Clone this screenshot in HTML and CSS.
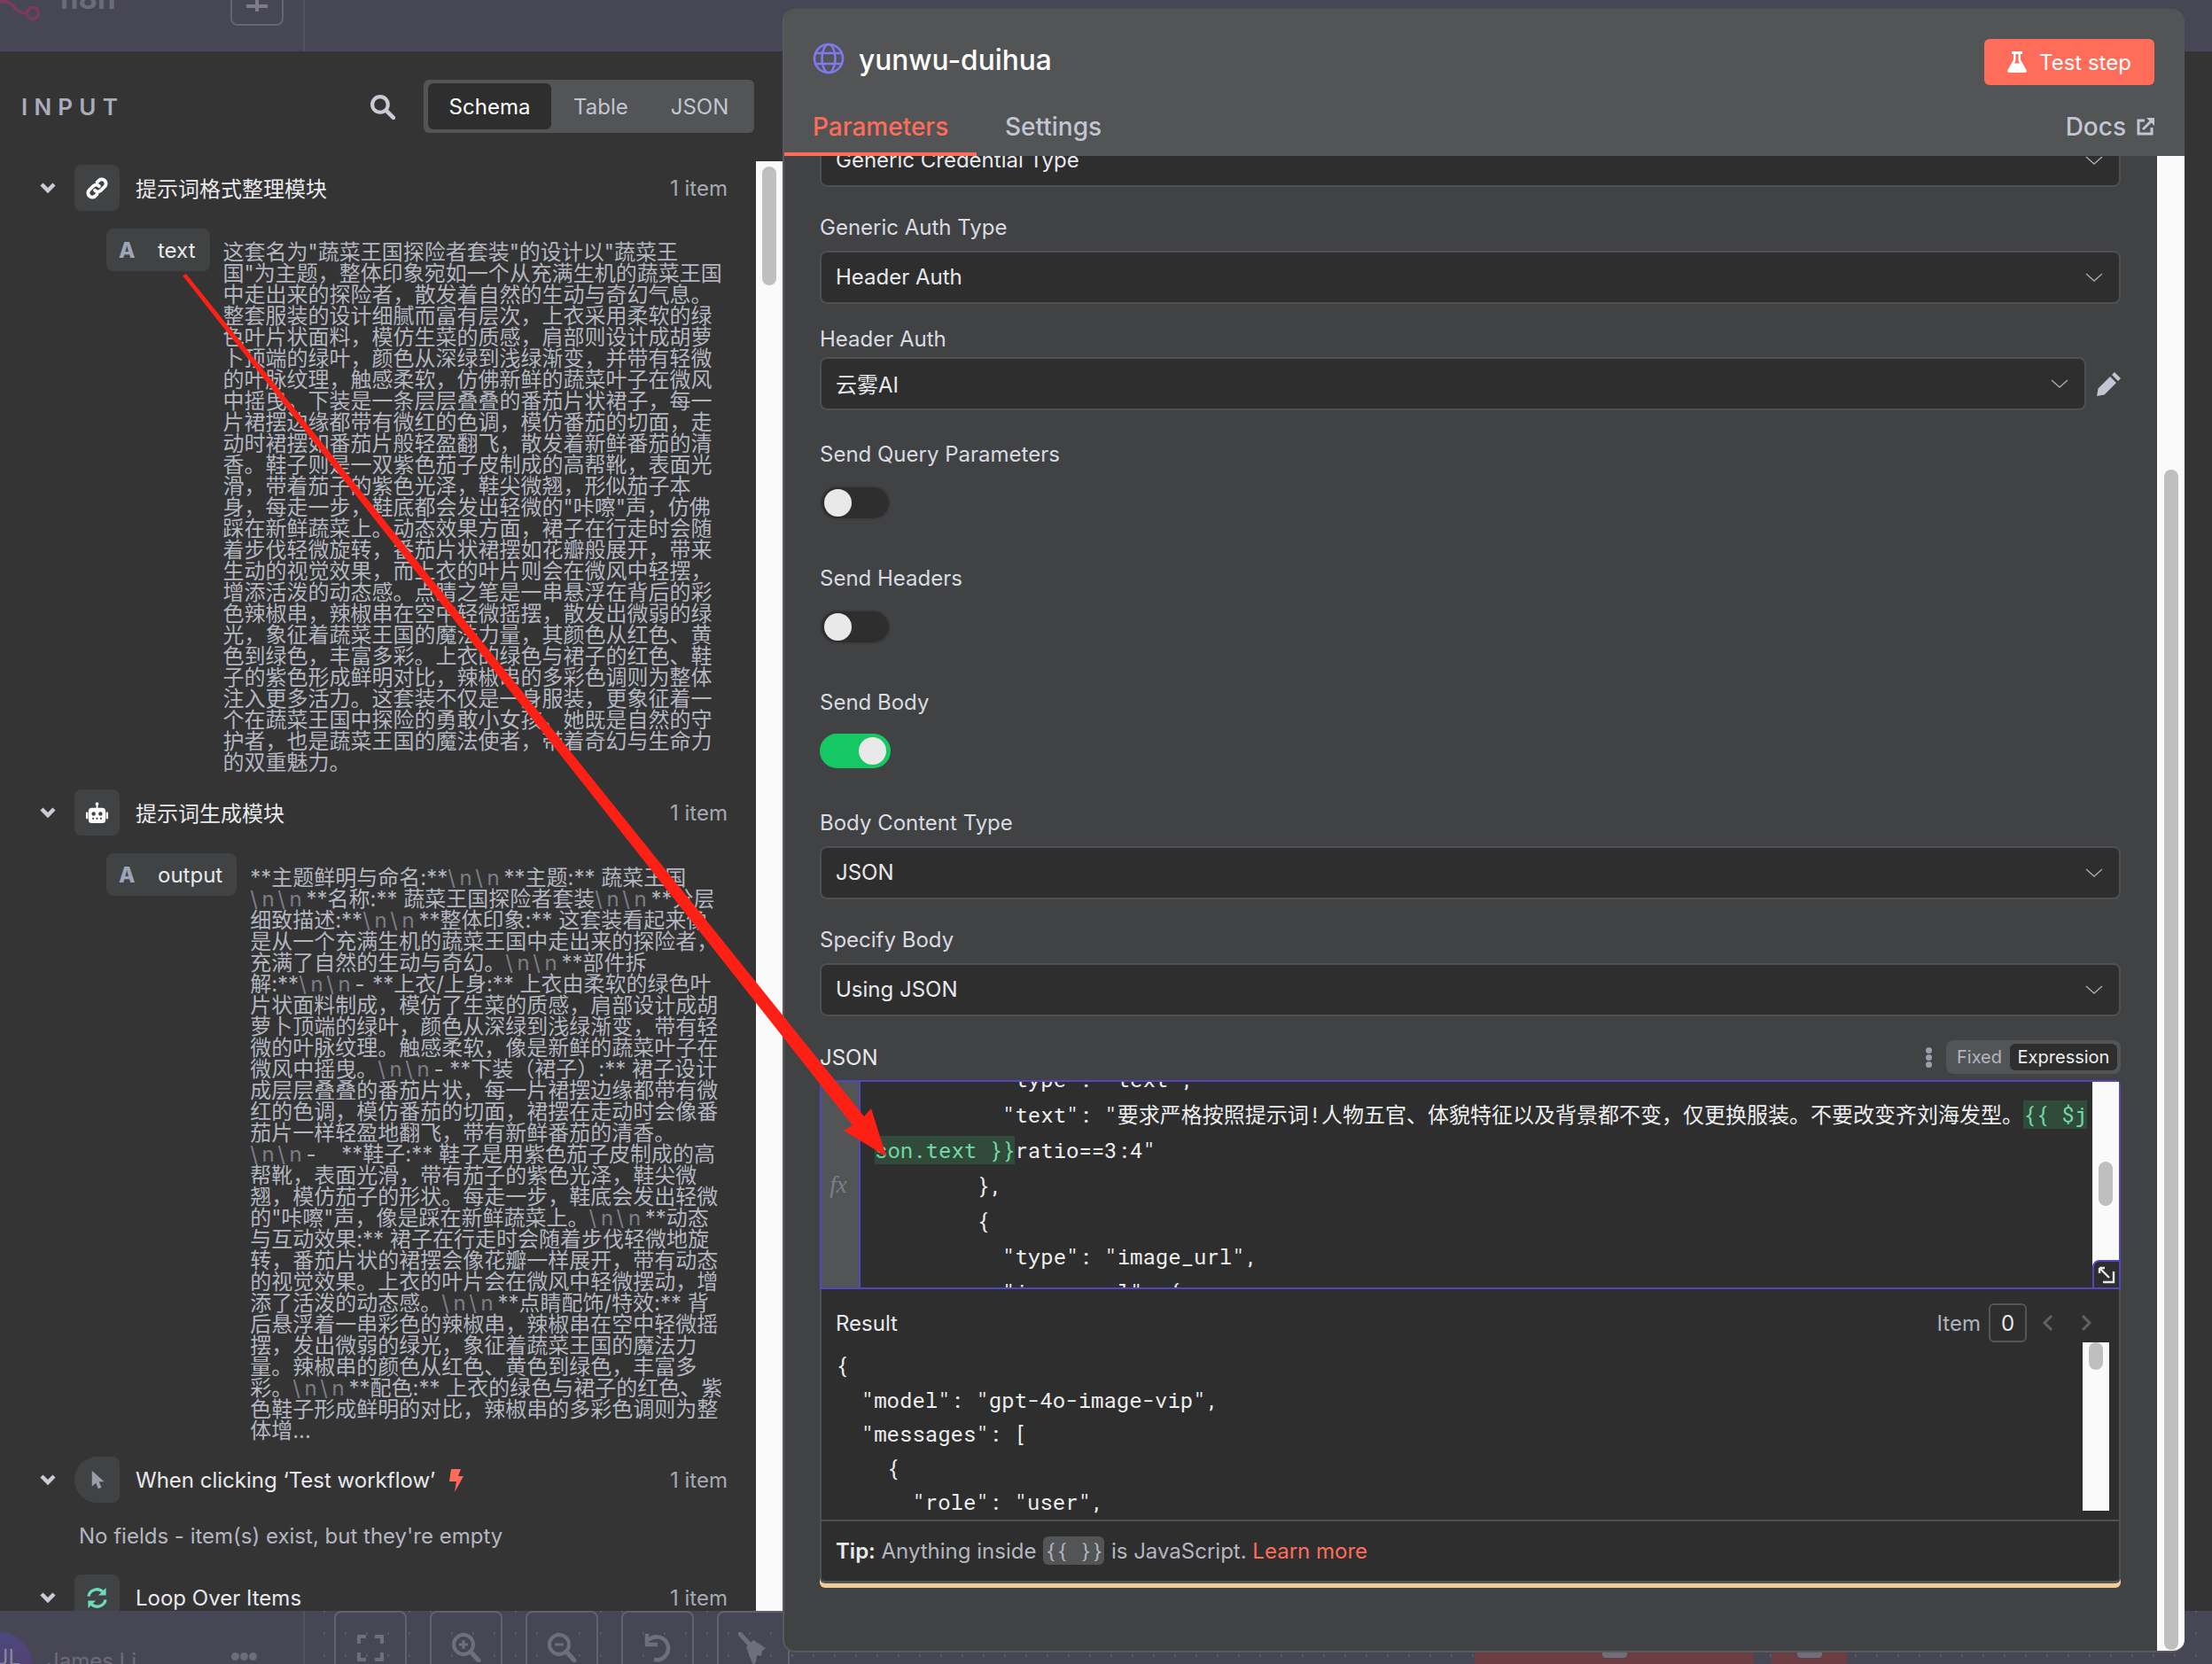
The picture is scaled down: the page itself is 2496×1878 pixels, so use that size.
FILE: index.html
```html
<!DOCTYPE html>
<html lang="zh-CN">
<head>
<meta charset="utf-8">
<title>yunwu-duihua</title>
<link rel="stylesheet" href="styles.css">
</head>
<body>
<div class="page">
  <header class="topbar">
    <div class="side-top">
      <svg class="logo" viewBox="0 0 50 30"><path d="M-4 4C6 -2 12 3 16 8c4 5 8 7 15 7" fill="none" stroke="#7a3c5c" stroke-width="3.500"/><circle cx="37" cy="15" r="6.500" fill="none" stroke="#7a3c5c" stroke-width="3.500"/></svg>
      <span class="brand">n8n</span>
      <span class="plus-btn"><svg viewBox="0 0 24 30" width="24" height="30"><path d="M12 0v26M0 20h24" stroke="#7c7b87" stroke-width="4"/></svg></span>
    </div>
  </header>

  <main class="main">
    <section class="input-panel">
      <div class="input-head">
        <span class="input-title">INPUT</span>
        <svg class="search" viewBox="0 0 28 28"><circle cx="11.5" cy="11.5" r="8.5" fill="none" stroke="#c9ccd6" stroke-width="4"/><path d="M18 18l8 8" stroke="#c9ccd6" stroke-width="4.5" stroke-linecap="round"/></svg>
        <div class="seg">
          <span class="seg-item seg-active">Schema</span>
          <span class="seg-item seg-table">Table</span>
          <span class="seg-item seg-json">JSON</span>
        </div>
      </div>
      <div class="input-scroll">
        <div class="schema">
          <div class="node-row">
            <svg class="caret" viewBox="0 0 20 14"><path d="M3 3l7 7 7-7" fill="none" stroke="#c9ccd6" stroke-width="4.5"/></svg>
            <span class="node-icon"><svg viewBox="0 0 28 28" width="27" height="27"><g fill="none" stroke="#fff" stroke-width="4" stroke-linecap="round"><path d="M11.5 16.5a5 5 0 0 0 7 0l5-5a5 5 0 0 0-7-7l-2.5 2.5"/><path d="M16.5 11.5a5 5 0 0 0-7 0l-5 5a5 5 0 0 0 7 7l2.5-2.5"/></g></svg></span>
            <span class="node-name node-name-cjk">提示词格式整理模块</span>
            <span class="node-count">1 item</span>
          </div>
          <div class="field-row">
            <span class="pill"><b class="pill-a">A</b><span class="pill-key">text</span></span>
            <p class="value value-text">这套名为"蔬菜王国探险者套装"的设计以"蔬菜王国"为主题，整体印象宛如一个从充满生机的蔬菜王国中走出来的探险者，散发着自然的生动与奇幻气息。整套服装的设计细腻而富有层次，上衣采用柔软的绿色叶片状面料，模仿生菜的质感，肩部则设计成胡萝卜顶端的绿叶，颜色从深绿到浅绿渐变，并带有轻微的叶脉纹理，触感柔软，仿佛新鲜的蔬菜叶子在微风中摇曳。下装是一条层层叠叠的番茄片状裙子，每一片裙摆边缘都带有微红的色调，模仿番茄的切面，走动时裙摆如番茄片般轻盈翻飞，散发着新鲜番茄的清香。鞋子则是一双紫色茄子皮制成的高帮靴，表面光滑，带着茄子的紫色光泽，鞋尖微翘，形似茄子本身，每走一步，鞋底都会发出轻微的"咔嚓"声，仿佛踩在新鲜蔬菜上。动态效果方面，裙子在行走时会随着步伐轻微旋转，番茄片状裙摆如花瓣般展开，带来生动的视觉效果，而上衣的叶片则会在微风中轻摆，增添活泼的动态感。点睛之笔是一串悬浮在背后的彩色辣椒串，辣椒串在空中轻微摇摆，散发出微弱的绿光，象征着蔬菜王国的魔法力量，其颜色从红色、黄色到绿色，丰富多彩。上衣的绿色与裙子的红色、鞋子的紫色形成鲜明对比，辣椒串的多彩色调则为整体注入更多活力。这套装不仅是一身服装，更象征着一个在蔬菜王国中探险的勇敢小女孩，她既是自然的守护者，也是蔬菜王国的魔法使者，带着奇幻与生命力的双重魅力。</p>
          </div>
          <div class="node-row node-row-2">
            <svg class="caret" viewBox="0 0 20 14"><path d="M3 3l7 7 7-7" fill="none" stroke="#c9ccd6" stroke-width="4.5"/></svg>
            <span class="node-icon"><svg viewBox="0 0 28 28" width="27" height="27"><path fill="#fff" d="M14 1.5a2 2 0 0 1 1 3.7V8h5a4 4 0 0 1 4 4v10a4 4 0 0 1-4 4H8a4 4 0 0 1-4-4V12a4 4 0 0 1 4-4h5V5.200a2 2 0 0 1 1-3.700z"/><rect x="1" y="13" width="2.500" height="8" rx="1" fill="#fff"/><rect x="24.500" y="13" width="2.500" height="8" rx="1" fill="#fff"/><circle cx="10" cy="15" r="2.300" fill="#414244"/><circle cx="18" cy="15" r="2.300" fill="#414244"/><path d="M8.500 20.500h2M13 20.500h2M17.500 20.500h2" stroke="#414244" stroke-width="2"/></svg></span>
            <span class="node-name node-name-cjk">提示词生成模块</span>
            <span class="node-count">1 item</span>
          </div>
          <div class="field-row">
            <span class="pill"><b class="pill-a">A</b><span class="pill-key">output</span></span>
            <p class="value value-output">**主题鲜明与命名:**<i class="nl">\n</i><i class="nl">\n</i>**主题:** 蔬菜王国<i class="nl">\n</i><i class="nl">\n</i>**名称:** 蔬菜王国探险者套装<i class="nl">\n</i><i class="nl">\n</i>**分层细致描述:**<i class="nl">\n</i><i class="nl">\n</i>**整体印象:** 这套装看起来像是从一个充满生机的蔬菜王国中走出来的探险者，充满了自然的生动与奇幻。<i class="nl">\n</i><i class="nl">\n</i>**部件拆解:**<i class="nl">\n</i><i class="nl">\n</i><span class="dash">-</span> **上衣/上身:** 上衣由柔软的绿色叶片状面料制成，模仿了生菜的质感，肩部设计成胡萝卜顶端的绿叶，颜色从深绿到浅绿渐变，带有轻微的叶脉纹理。触感柔软，像是新鲜的蔬菜叶子在微风中摇曳。<i class="nl">\n</i><i class="nl">\n</i>- **下装（裙子）:** 裙子设计成层层叠叠的番茄片状，每一片裙摆边缘都带有微红的色调，模仿番茄的切面，裙摆在走动时会像番茄片一样轻盈地翻飞，带有新鲜番茄的清香。<i class="nl">\n</i><i class="nl">\n</i><span class="dash-wide">-</span> **鞋子:** 鞋子是用紫色茄子皮制成的高帮靴，表面光滑，带有茄子的紫色光泽，鞋尖微翘，模仿茄子的形状。每走一步，鞋底会发出轻微的"咔嚓"声，像是踩在新鲜蔬菜上。<i class="nl">\n</i><i class="nl">\n</i>**动态与互动效果:** 裙子在行走时会随着步伐轻微地旋转，番茄片状的裙摆会像花瓣一样展开，带有动态的视觉效果。上衣的叶片会在微风中轻微摆动，增添了活泼的动态感。<i class="nl">\n</i><i class="nl">\n</i>**点睛配饰/特效:** 背后悬浮着一串彩色的辣椒串，辣椒串在空中轻微摇摆，发出微弱的绿光，象征着蔬菜王国的魔法力量。辣椒串的颜色从红色、黄色到绿色，丰富多彩。<i class="nl">\n</i><i class="nl">\n</i>**配色:** 上衣的绿色与裙子的红色、紫色鞋子形成鲜明的对比，辣椒串的多彩色调则为整体增...</p>
          </div>
          <div class="node-row node-row-3">
            <svg class="caret" viewBox="0 0 20 14"><path d="M3 3l7 7 7-7" fill="none" stroke="#c9ccd6" stroke-width="4.5"/></svg>
            <span class="node-icon node-icon-round"><svg viewBox="0 0 20 28" width="18" height="25"><path fill="#9a9da8" d="M3 2v20l5-4.500L11 25l4-1.700-3-7.300h6.500z"/></svg></span>
            <span class="node-name">When clicking ‘Test workflow’</span>
            <svg class="bolt" viewBox="0 0 18 26"><path fill="#ff6d5a" d="M3 0h11l-3 8h6L7 26l2-12H1z"/></svg>
            <span class="node-count">1 item</span>
          </div>
          <p class="no-fields">No fields - item(s) exist, but they're empty</p>
          <div class="node-row node-row-4">
            <svg class="caret" viewBox="0 0 20 14"><path d="M3 3l7 7 7-7" fill="none" stroke="#c9ccd6" stroke-width="4.5"/></svg>
            <span class="node-icon"><svg viewBox="0 0 26 26" width="25" height="25"><g fill="none" stroke="#6adcbb" stroke-width="3.400"><path d="M3 11a10 10 0 0 1 17-5"/><path d="M23 15a10 10 0 0 1-17 5"/></g><path fill="#6adcbb" d="M23.500 1v9h-9zM2.500 25v-9h9z"/></svg></span>
            <span class="node-name">Loop Over Items</span>
            <span class="node-count">1 item</span>
          </div>
        </div>
        <div class="scrollbar left-bar"><span class="thumb left-thumb"></span></div>
      </div>
    </section>
  </main>

  <footer class="bottombar">
    <div class="side-bottom">
      <span class="avatar">JL</span>
      <span class="user">James Li</span>
      <span class="more"><i></i><i></i><i></i></span>
    </div>
    <div class="tools">
      <span class="tool tool-fit"><svg viewBox="0 0 30 30" width="30" height="30"><path d="M2 10V2h8M20 2h8v8M28 20v8h-8M10 28H2v-8" fill="none" stroke="#6f6e7b" stroke-width="4"/></svg></span>
      <span class="tool"><svg viewBox="0 0 34 34" width="34" height="34"><circle cx="14" cy="14" r="11" fill="none" stroke="#6f6e7b" stroke-width="4"/><path d="M22 22l9 10" stroke="#6f6e7b" stroke-width="5" stroke-linecap="round"/><path d="M14 9v10M9 14h10" stroke="#6f6e7b" stroke-width="3"/></svg></span>
      <span class="tool"><svg viewBox="0 0 34 34" width="34" height="34"><circle cx="14" cy="14" r="11" fill="none" stroke="#6f6e7b" stroke-width="4"/><path d="M22 22l9 10" stroke="#6f6e7b" stroke-width="5" stroke-linecap="round"/><path d="M9 14h10" stroke="#6f6e7b" stroke-width="3"/></svg></span>
      <span class="tool"><svg viewBox="0 0 34 34" width="34" height="34"><path d="M7 9a13 13 0 1 1 6 22" fill="none" stroke="#6f6e7b" stroke-width="4.500"/><path d="M5 2v12h12" fill="none" stroke="#6f6e7b" stroke-width="4.500"/></svg></span>
      <span class="tool"><svg viewBox="0 0 34 40" width="34" height="40"><path d="M2 2l12 13" stroke="#6f6e7b" stroke-width="5" stroke-linecap="round"/><path fill="#6f6e7b" d="M9 17l8-8 14 9-4 3-1 6-5-1-1 8-3 4z"/></svg></span>
    </div>
    <span class="stub stub-a"><i></i></span>
    <span class="stub stub-b"><i></i></span>
  </footer>

  <section class="detail">
    <div class="detail-head">
      <div class="title-row">
        <svg class="globe" viewBox="0 0 36 36"><g fill="none" stroke="#8078f0" stroke-width="2.600"><circle cx="18" cy="18" r="16"/><ellipse cx="18" cy="18" rx="7.500" ry="16"/><path d="M3.500 12h29M3.500 24h29"/></g></svg>
        <span class="title">yunwu-duihua</span>
        <span class="test-btn"><svg viewBox="0 0 22 24" width="22" height="24"><path fill="#fff" d="M5 0h12v3h-2v6.500l6.500 11.500c.8 1.500 0 3-1.800 3H2.300c-1.800 0-2.600-1.500-1.800-3L7 9.500V3H5z"/><path fill="#ff6d5a" d="M9.500 3h3v7.500l1.500 3H8l1.500-3z"/></svg>Test step</span>
      </div>
      <div class="tabs">
        <span class="tab tab-active">Parameters</span>
        <span class="tab">Settings</span>
        <span class="docs">Docs<svg viewBox="0 0 20 20" width="20" height="20"><path d="M9 3H2v15h15v-7" fill="none" stroke="#c2c6d2" stroke-width="3"/><path d="M7 13L17 3" fill="none" stroke="#c2c6d2" stroke-width="3"/><path fill="#c2c6d2" d="M11 0h9v9z"/></svg></span>
      </div>
    </div>
    <div class="detail-body">
      <div class="form-clip">
        <div class="form">
          <div class="select"><span>Generic Credential Type</span><svg class="chev" viewBox="0 0 20 10"><path d="M1 1l9 8 9-8" fill="none" stroke="#a3a7b3" stroke-width="1.500"/></svg></div>

          <label class="label gap-a">Generic Auth Type</label>
          <div class="select"><span>Header Auth</span><svg class="chev" viewBox="0 0 20 10"><path d="M1 1l9 8 9-8" fill="none" stroke="#a3a7b3" stroke-width="1.500"/></svg></div>

          <label class="label gap-b label-tight">Header Auth</label>
          <div class="select-row">
            <div class="select select-short"><span>云雾AI</span><svg class="chev" viewBox="0 0 20 10"><path d="M1 1l9 8 9-8" fill="none" stroke="#a3a7b3" stroke-width="1.500"/></svg></div>
            <svg class="pencil" viewBox="0 0 30 30"><path fill="#c2c6d2" d="M21 2l7 7-3 3-7-7zM16 7l7 7L9.500 27.500 1 29l1.500-8.500z"/></svg>
          </div>

          <label class="label gap-c label-toggle">Send Query Parameters</label>
          <span class="toggle"><i></i></span>
          <label class="label gap-d label-toggle">Send Headers</label>
          <span class="toggle"><i></i></span>
          <label class="label gap-d label-toggle">Send Body</label>
          <span class="toggle toggle-on"><i></i></span>

          <label class="label gap-e">Body Content Type</label>
          <div class="select"><span>JSON</span><svg class="chev" viewBox="0 0 20 10"><path d="M1 1l9 8 9-8" fill="none" stroke="#a3a7b3" stroke-width="1.500"/></svg></div>

          <label class="label gap-f">Specify Body</label>
          <div class="select"><span>Using JSON</span><svg class="chev" viewBox="0 0 20 10"><path d="M1 1l9 8 9-8" fill="none" stroke="#a3a7b3" stroke-width="1.500"/></svg></div>

          <div class="json-head">
            <span class="json-label">JSON</span>
            <span class="kebab"><i></i><i></i><i></i></span>
            <div class="mode"><span class="mode-item">Fixed</span><span class="mode-item mode-active">Expression</span></div>
          </div>

          <div class="editor">
            <div class="gutter"><span class="fx">fx</span></div>
            <div class="code">
              <div class="code-lines">
                <div class="ln">          "type": "text",</div>
                <div class="ln">          "text": "要求严格按照提示词!人物五官、体貌特征以及背景都不变，仅更换服装。不要改变齐刘海发型。<span class="expr">{{ $j</span></div>
                <div class="ln"><span class="expr">son.text }}</span>ratio==3:4"</div>
                <div class="ln">        },</div>
                <div class="ln">        {</div>
                <div class="ln">          "type": "image_url",</div>
                <div class="ln">          "image_url": {</div>
              </div>
            </div>
            <div class="scrollbar editor-bar"><span class="thumb editor-thumb"></span></div>
            <span class="expand"><svg viewBox="0 0 20 20" width="20" height="20"><path d="M2 2l11 11M2 2h6M2 2v6" fill="none" stroke="#e6e7ec" stroke-width="2.400"/><path d="M18 6v12H6" fill="none" stroke="#e6e7ec" stroke-width="2.400"/></svg></span>
          </div>

          <div class="result-wrap">
            <div class="result">
              <div class="result-head">
                <span class="result-title">Result</span>
                <span class="item-label">Item</span>
                <span class="item-box">0</span>
                <svg class="pager" viewBox="0 0 12 20"><path d="M10 2l-8 8 8 8" fill="none" stroke="#626262" stroke-width="3"/></svg>
                <svg class="pager" viewBox="0 0 12 20"><path d="M2 2l8 8-8 8" fill="none" stroke="#626262" stroke-width="3"/></svg>
              </div>
              <div class="result-body">
                <div class="result-code">
                  <div class="rl">{</div>
                  <div class="rl">  "model": "gpt-4o-image-vip",</div>
                  <div class="rl">  "messages": [</div>
                  <div class="rl">    {</div>
                  <div class="rl">      "role": "user",</div>
                </div>
                <div class="scrollbar result-bar"><span class="thumb result-thumb"></span></div>
              </div>
              <div class="tip"><b>Tip:</b> Anything inside <code class="tip-code">{{ }}</code> is JavaScript. <span class="tip-link">Learn more</span></div>
            </div>
          </div>
        </div>
      </div>
      <div class="scrollbar page-bar"><span class="thumb page-thumb"></span></div>
    </div>
  </section>

  <svg class="arrow" viewBox="0 0 2496 1878"><path fill="#ff2015" d="M206 311L210 309 975 1260 983 1251 1000 1305 952 1276 962 1270z"/></svg>
</div>
</body>
</html>
```

FILE: styles.css
```css
* { box-sizing: border-box; }
html, body { margin: 0; padding: 0; }
body {
  width: 2496px;
  height: 1878px;
  overflow: hidden;
  background: #474655;
  font-family: Inter, "Noto Sans CJK SC", sans-serif;
  font-size: 24px;
  color: #e8e9ec;
}
.page {
  position: relative;
  width: 2496px;
  height: 1878px;
  display: flex;
  flex-direction: column;
  overflow: hidden;
}

/* canvas chrome */
.topbar { height: 58px; background: #474655; flex: none; overflow: hidden; }
.side-top {
  width: 344px;
  height: 58px;
  border-right: 2px solid #525160;
  display: flex;
  align-items: flex-start;
  position: relative;
}
.logo { width: 50px; height: 30px; flex: none; }
.brand { margin: -22px 0 0 18px; font-size: 33px; font-weight: 700; line-height: 40px; color: #6c6b78; }
.plus-btn {
  margin: -30px 0 0 129px;
  width: 60px;
  height: 59px;
  padding-top: 15px;
  border: 2px solid #65646f;
  border-radius: 8px;
  display: flex;
  align-items: flex-start;
  justify-content: center;
}

.main { flex: 1; min-height: 0; background: #343434; }
.input-panel { width: 883px; height: 100%; display: flex; flex-direction: column; background: #343434; border-top-left-radius: 12px; }
.input-head { height: 124px; flex: none; display: flex; align-items: center; padding: 0 32px 0 24px; }
.input-title { font-size: 26px; font-weight: 600; letter-spacing: 7.200px; color: #a9adba; }
.search { width: 29px; height: 29px; margin-left: auto; margin-right: 32px; }
.seg {
  width: 373px;
  height: 60px;
  padding: 4px 5px;
  display: flex;
  align-items: center;
  background: #535456;
  border-radius: 6px;
  font-size: 24px;
}
.seg-item { color: #c2c6d2; }
.seg-active { width: 139px; height: 52px; border-radius: 6px; background: #2e2e2e; color: #fff; display: flex; align-items: center; justify-content: center; }
.seg-table { margin-left: 25px; }
.seg-json { margin-left: 48px; }
.input-scroll { flex: 1; min-height: 0; display: flex; overflow: hidden; }
.schema { width: 853px; flex: none; padding-top: 4px; overflow: hidden; }
.node-row { height: 52px; display: flex; align-items: center; padding-left: 44px; padding-right: 32px; }
.node-row-2 { margin-top: 18px; }
.node-row-3 { margin-top: 17px; }
.node-row-4 { margin-top: 28px; }
.caret { width: 20px; height: 14px; flex: none; }
.node-icon {
  width: 51px;
  height: 52px;
  flex: none;
  margin: 0 18px 0 20px;
  background: #414244;
  border-radius: 8px;
  display: flex;
  align-items: center;
  justify-content: center;
}
.node-icon-round { border-radius: 50% 8px 8px 50%; }
.node-name { font-size: 24px; color: #e8e9ec; white-space: nowrap; }
.node-name-cjk { padding-bottom: 2px; }
.bolt { width: 18px; height: 26px; margin-left: 15px; margin-top: 2px; flex: none; }
.node-count { margin-left: auto; color: #a5a9b5; font-size: 24px; }
.field-row { display: flex; align-items: flex-start; margin-top: 20px; padding-left: 120px; }
.pill {
  height: 48px;
  padding: 0 16px 0 14px;
  display: flex;
  align-items: center;
  flex: none;
  background: #414244;
  border-radius: 8px;
}
.pill-a { width: 18px; color: #9ea4b4; font-weight: 800; font-size: 24px; }
.pill-key { margin-left: 26px; color: #e8e9ec; }
.value {
  margin: 15px 0 0 15px;
  font-size: 24px;
  line-height: 24px;
  color: #b3b6c0;
}
.value-text { width: 564px; }
.value-output { width: 537px; margin-top: 16px; }
.nl { font-style: normal; color: #7c7e87; letter-spacing: 4.700px; }
.dash { letter-spacing: 2px; }
.dash-wide { letter-spacing: 22px; }
.no-fields { margin: 23px 0 0 89px; color: #b3b6c0; line-height: 30px; }

/* scrollbars */
.scrollbar { background: #fafafa; display: flex; justify-content: center; }
.thumb { display: block; background: #bfbfbf; border-radius: 8px; width: 16px; }
.left-bar { width: 30px; flex: none; align-items: flex-start; padding-top: 6px; }
.left-thumb { height: 134px; }

/* bottom */
.bottombar {
  height: 60px;
  flex: none;
  background-color: #474655;
  background-image: radial-gradient(circle, #5d5c69 1px, transparent 1.500px);
  background-size: 24px 25px;
  background-position: -6px -12px;
  display: flex;
  overflow: hidden;
}
.side-bottom {
  width: 344px;
  flex: none;
  background: #474655;
  border-right: 2px solid #525160;
  display: flex;
  align-items: flex-start;
  position: relative;
}
.avatar {
  width: 72px;
  height: 72px;
  flex: none;
  margin: 24px 0 0 -36px;
  border-radius: 50%;
  background: linear-gradient(135deg, #4a4a82, #53406e);
  color: #8a8a96;
  display: flex;
  justify-content: flex-end;
  padding: 14px 13px 0 0;
  font-size: 24px;
}
.user { margin: 42px 0 0 17px; color: #6d6c7a; font-size: 24px; line-height: 30px; }
.more { margin: 47px 0 0 107px; display: flex; gap: 1px; }
.more i { width: 9px; height: 9px; border-radius: 50%; background: #6d6c7a; }
.tools { display: flex; gap: 26px; margin-left: 33px; }
.tool {
  width: 82px;
  height: 90px;
  padding-top: 22px;
  flex: none;
  border: 2px solid #62616f;
  border-radius: 8px;
  display: flex;
  justify-content: center;
  align-items: flex-start;
}
.tool-fit { padding-top: 25px; }
.stub { align-self: flex-end; height: 13px; background: #6b3e44; display: flex; justify-content: center; }
.stub i { display: block; width: 28px; height: 6px; border-radius: 0 0 4px 4px; background: #6f6e7b; }
.stub-a { width: 315px; margin-left: 773px; }
.stub-b { width: 85px; margin-left: 20px; }

/* detail panel floating over the canvas */
.detail {
  position: absolute;
  left: 883px;
  top: 10px;
  width: 1582px;
  height: 1855px;
  display: flex;
  flex-direction: column;
  border-radius: 14px;
  overflow: hidden;
  background: #414244;
  border-bottom: 2px solid #5a5a5c;
  border-left: 2px solid #5a5a5c;
}
.detail-head { height: 166px; flex: none; background: #535456; padding: 0 34px 0 32px; position: relative; z-index: 1; }
.title-row { height: 114px; display: flex; align-items: center; padding-top: 6px; }
.globe { width: 36px; height: 36px; flex: none; margin-top: -8px; }
.title { margin: -6px 0 0 16px; font-size: 31.700px; font-weight: 500; color: #fff; }
.test-btn {
  margin-left: auto;
  width: 192px;
  height: 52px;
  background: #ff6d5a;
  border-radius: 6px;
  color: #fff;
  font-size: 24px;
  display: flex;
  align-items: center;
  justify-content: center;
  gap: 14px;
}
.tabs { height: 52px; display: flex; align-items: flex-start; margin-left: -32px; }
.tab { padding: 2px 32px 14px; height: 52px; font-size: 28px; line-height: 34px; color: #c2c6d2; font-weight: 500; }
.tab-active { color: #ff6d5a; border-bottom: 4px solid #ff6d5a; width: 217px; }
.docs { margin-left: auto; padding-top: 2px; display: flex; align-items: center; gap: 12px; font-size: 28px; line-height: 34px; color: #c2c6d2; font-weight: 500; }
.detail-body { flex: 1; min-height: 0; display: flex; }
.form-clip { flex: 1; min-width: 0; overflow: hidden; padding: 0 41px 0 40px; }
.form { margin-top: -25px; }
.page-bar { width: 31px; flex: none; align-items: flex-start; padding-top: 354px; }
.page-thumb { height: 1332px; }

.select {
  height: 60px;
  padding: 0 18px 0 16px;
  display: flex;
  align-items: center;
  justify-content: space-between;
  background: #2e2e2e;
  border: 2px solid #4f4f51;
  border-radius: 8px;
  color: #e8e9ec;
  font-size: 24px;
}
.select span { padding-bottom: 1px; }
.chev { width: 20px; height: 10px; flex: none; }
.select-row { display: flex; align-items: center; }
.select-short { width: 1429px; flex: none; }
.pencil { width: 30px; height: 30px; margin-left: 11px; flex: none; }
.label { display: block; height: 30px; line-height: 30px; font-size: 24px; color: #d9dbe1; margin-bottom: 11px; }
.label-tight { margin-bottom: 5px; }
.label-toggle { margin-bottom: 20px; }
.gap-a { margin-top: 31px; }
.gap-b { margin-top: 25px; }
.gap-c { margin-top: 35px; }
.gap-d { margin-top: 51px; }
.gap-e { margin-top: 47px; }
.gap-f { margin-top: 31px; }
.toggle {
  display: block;
  width: 80px;
  height: 39px;
  border-radius: 20px;
  background: #2e2e2e;
  border: 2px solid #3c3c3e;
  padding: 2px 3px;
}
.toggle i { display: block; width: 31px; height: 31px; border-radius: 50%; background: #e9e9ea; }
.toggle-on { background: #15c864; border-color: #15c864; display: flex; justify-content: flex-end; }

.json-head { margin-top: 27px; height: 38px; display: flex; align-items: center; }
.json-label { color: #e8e9ec; }
.kebab { margin-left: auto; display: flex; flex-direction: column; gap: 1px; }
.kebab i { width: 7px; height: 7px; border-radius: 50%; background: #9a9ea9; }
.mode { margin-left: 16px; width: 197px; height: 38px; background: #535456; border-radius: 8px; display: flex; align-items: center; padding: 0 4px 0 12px; font-size: 20px; }
.mode-item { color: #b3b6c0; }
.mode-active { margin-left: auto; width: 121px; height: 30px; line-height: 30px; text-align: center; background: #2e2e2e; border-radius: 6px; color: #eceded; }

.editor {
  position: relative;
  margin-top: 7px;
  height: 236px;
  display: flex;
  background: #2e2e2e;
  border: 2px solid #5346bf;
  border-radius: 4px 6px 0 0;
}
.gutter { width: 44px; flex: none; background: #535456; border-right: 2px solid #5346bf; display: flex; align-items: center; justify-content: center; padding-top: 1px; padding-right: 4px; }
.fx { font-family: "Liberation Serif", serif; font-style: italic; font-size: 27px; color: #7c7f89; }
.code { flex: 1; min-width: 0; overflow: hidden; padding-left: 16px; }
.code-lines { margin-top: -23px; }
.ln { height: 40px; line-height: 40px; white-space: pre; font-family: "Roboto Mono", "Noto Sans CJK SC", monospace; font-size: 24px; color: #eceded; }
.expr { background: #314b3b; color: #72d8a6; }
.editor-bar { width: 30px; flex: none; align-items: flex-start; padding-top: 90px; }
.editor-thumb { height: 50px; }
.expand {
  position: absolute;
  right: -2px;
  bottom: -2px;
  width: 32px;
  height: 33px;
  background: #2e2e2e;
  border: 2px solid #5346bf;
  border-top-left-radius: 8px;
  display: flex;
  align-items: center;
  justify-content: center;
}

.result-wrap { padding-bottom: 5px; background: #f3cd99; border-radius: 0 0 6px 6px; }
.result { background: #2e2e2e; border-left: 2px solid #505052; border-right: 2px solid #505052; border-bottom: 3px solid #555; border-radius: 0 0 6px 6px; }
.result-head { height: 60px; display: flex; align-items: center; padding: 16px 31px 0 16px; }
.result-title { margin-right: auto; color: #e8e9ec; }
.item-label { color: #aeb2be; }
.item-box { width: 43px; height: 44px; margin-left: 9px; border: 2px solid #555; border-radius: 6px; display: flex; align-items: center; justify-content: center; color: #e8e9ec; }
.pager { width: 12px; height: 20px; margin-left: 18px; flex: none; }
.pager + .pager { margin-left: 31px; }
.result-body { height: 202px; display: flex; border-bottom: 2px solid #505052; overflow: hidden; }
.result-code { flex: 1; padding: 7px 0 0 16px; }
.rl { height: 38.500px; line-height: 38.500px; white-space: pre; font-family: "Roboto Mono", monospace; font-size: 24px; color: #eceded; }
.result-bar { width: 30px; height: 190px; margin-right: 11px; flex: none; align-items: flex-start; }
.result-thumb { height: 31px; }
.tip { height: 67px; display: flex; align-items: center; padding: 0 0 1px 16px; color: #b3b6c0; white-space: pre; }
.tip b { color: #e8e9ec; font-weight: 600; }
.tip-code { margin: 0 1px; width: 69px; height: 32px; line-height: 32px; text-align: center; background: #535456; border-radius: 6px; font-family: "Roboto Mono", monospace; font-size: 22px; }
.tip-link { color: #ff6d5a; }

.arrow { position: absolute; left: 0; top: 0; width: 2496px; height: 1878px; pointer-events: none; }
```
